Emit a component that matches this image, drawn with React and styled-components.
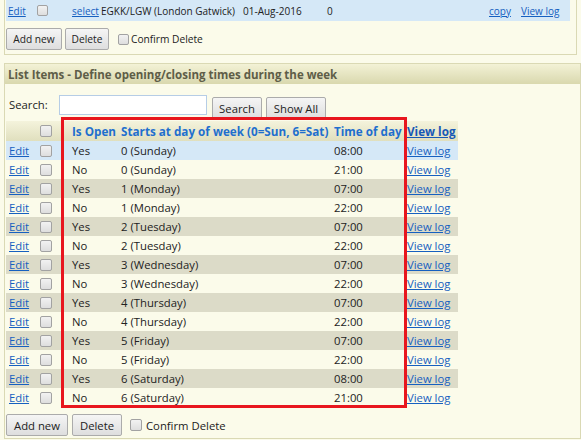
import React from 'react'
import styled, { createGlobalStyle } from 'styled-components'

const GlobalStyle = createGlobalStyle`
  html, body {
    margin: 0;
    padding: 0;
    background: #fbfbea;
    overflow: hidden;
  }
  body {
    font-family: "Open Sans", "Noto Sans", sans-serif;
    color: #222;
  }
`

const items = [
  ['Yes', '0 (Sunday)', '08:00'],
  ['No', '0 (Sunday)', '21:00'],
  ['Yes', '1 (Monday)', '07:00'],
  ['No', '1 (Monday)', '22:00'],
  ['Yes', '2 (Tuesday)', '07:00'],
  ['No', '2 (Tuesday)', '22:00'],
  ['Yes', '3 (Wednesday)', '07:00'],
  ['No', '3 (Wednesday)', '22:00'],
  ['Yes', '4 (Thursday)', '07:00'],
  ['No', '4 (Thursday)', '22:00'],
  ['Yes', '5 (Friday)', '07:00'],
  ['No', '5 (Friday)', '22:00'],
  ['Yes', '6 (Saturday)', '08:00'],
  ['No', '6 (Saturday)', '21:00'],
]

const rowTone = (i) => (i === 0 ? '#d5e8f7' : i % 2 === 1 ? '#fbfbea' : '#dcdbc8')

const App = () => {
  return (
    <>
      <GlobalStyle />
      <Panel $width="573px" $top="0">
        <RecordRow>
          <Cell><Link>Edit</Link></Cell>
          <Cell><Box $size={11} /></Cell>
          <Cell><Link>select</Link></Cell>
          <Cell>EGKK/LGW (London Gatwick)</Cell>
          <Cell>01-Aug-2016</Cell>
          <Cell>0</Cell>
          <Cell><Link>copy</Link></Cell>
          <Cell><Link>View log</Link></Cell>
        </RecordRow>
        <ButtonBar $small>
          <Button $small $w={56}>Add new</Button>
          <Button $small $w={44}>Delete</Button>
          <Confirm $small>
            <Box $size={11} />
            Confirm Delete
          </Confirm>
        </ButtonBar>
      </Panel>

      <Panel $width="577px" $top="8px" $bordered>
        <PanelTitle>List Items - Define opening/closing times during the week</PanelTitle>
        <SearchRow>
          <SearchLabel>Search:</SearchLabel>
          <SearchInput />
          <Button $w={50}>Search</Button>
          <Button $w={60}>Show All</Button>
        </SearchRow>

        <Table>
          <HeadRow>
            <HeadCell />
            <HeadCell><Box $size={12} /></HeadCell>
            <HeadCell>Is Open</HeadCell>
            <HeadCell>Starts at day of week (0=Sun, 6=Sat)</HeadCell>
            <HeadCell>Time of day</HeadCell>
            <HeadCell><HeadLink>View log</HeadLink></HeadCell>
          </HeadRow>
          {items.map((r, i) => (
            <DataRow key={i} $bg={rowTone(i)}>
              <DataCell><Link>Edit</Link></DataCell>
              <DataCell><Box $size={12} /></DataCell>
              <DataCell>{r[0]}</DataCell>
              <DataCell>{r[1]}</DataCell>
              <DataCell>{r[2]}</DataCell>
              <DataCell><Link>View log</Link></DataCell>
            </DataRow>
          ))}
          <Highlight />
        </Table>

        <ButtonBar>
          <Button $w={62}>Add new</Button>
          <Button $w={50}>Delete</Button>
          <Confirm>
            <Box $size={12} />
            Confirm Delete
          </Confirm>
        </ButtonBar>
      </Panel>
    </>
  )
}

export default App

const Panel = styled.div`
  margin: ${p => p.$top} 0 0 4px;
  width: ${p => p.$width};
  box-sizing: border-box;
  border: 1px solid #dad9b4;
  border-top: ${p => (p.$bordered ? '1px solid #dad9b4' : 'none')};
  padding: 0 1px;
  background: #fbfbea;
`

const RecordRow = styled.div`
  display: grid;
  grid-template-columns: 29px 35px 29px 142px 84px 162px 32px 51px;
  align-items: center;
  height: 21px;
  margin-right: 5px;
  background: #d5e8f7;
  font-size: 10px;
`

const Cell = styled.div`
  padding-left: 2px;
  white-space: nowrap;
  display: flex;
  align-items: center;
`

const Link = styled.a`
  color: #1660c0;
  text-decoration: underline;
  cursor: pointer;
`

const Box = styled.span`
  display: inline-block;
  box-sizing: border-box;
  width: ${p => p.$size}px;
  height: ${p => p.$size}px;
  border: 1px solid #a2a2a2;
  border-radius: 2px;
  background: linear-gradient(#f2f2f2, #dedede);
  flex-shrink: 0;
`

const ButtonBar = styled.div`
  display: flex;
  align-items: center;
  gap: ${p => (p.$small ? '3px' : '4px')};
  margin-top: 7px;
  padding-bottom: ${p => (p.$small ? '4px' : '2px')};
`

const Button = styled.button`
  box-sizing: border-box;
  width: ${p => p.$w}px;
  height: 22px;
  padding: 0;
  border: 1px solid #ababab;
  border-radius: 2px;
  background: linear-gradient(#f5f5f5, #dedede);
  color: #222;
  font-family: inherit;
  font-size: ${p => (p.$small ? '10.2px' : '11.3px')};
  cursor: pointer;
`

const Confirm = styled.label`
  display: flex;
  align-items: center;
  gap: ${p => (p.$small ? '2px' : '4px')};
  margin-left: ${p => (p.$small ? '6px' : '4px')};
  font-size: ${p => (p.$small ? '10.2px' : '11.3px')};
  color: #222;
`

const PanelTitle = styled.div`
  height: 20px;
  margin: 0 -1px;
  padding-left: 3px;
  display: flex;
  align-items: center;
  background: linear-gradient(#f3f2d6, #d9d8ae);
  color: #5e5d48;
  font-weight: bold;
  font-size: 11.5px;
  white-space: nowrap;
`

const SearchRow = styled.div`
  display: flex;
  align-items: flex-start;
  gap: 4px;
  height: 24px;
  margin-top: 11px;
  margin-bottom: 2px;
  button {
    margin-top: 2px;
  }
`

const SearchLabel = styled.div`
  width: 49px;
  padding-left: 3px;
  box-sizing: border-box;
  line-height: 20px;
  font-size: 11.3px;
`

const SearchInput = styled.input`
  box-sizing: border-box;
  width: 148px;
  height: 20px;
  margin: 0 1px 0 0;
  border: 1px solid #b6cde6;
  background: #fff;
  outline: none;
`

const Table = styled.div`
  position: relative;
  width: 452px;
  font-size: 11.3px;
`

const columns = '31px 32px 49px 213px 73px 54px'

const HeadRow = styled.div`
  display: grid;
  grid-template-columns: ${columns};
  align-items: center;
  height: 20px;
  background: linear-gradient(#f4f3dc, #e0dfbe);
`

const HeadCell = styled.div`
  padding-left: 3px;
  display: flex;
  align-items: center;
  white-space: nowrap;
  font-weight: bold;
  font-size: 11.7px;
  color: #1f6fce;
`

const HeadLink = styled.a`
  color: #1658b6;
  text-decoration: underline;
`

const DataRow = styled.div`
  display: grid;
  grid-template-columns: ${columns};
  align-items: center;
  height: 19px;
  background: ${p => p.$bg};
`

const DataCell = styled.div`
  padding-left: 3px;
  display: flex;
  align-items: center;
  white-space: nowrap;
  color: #222;
`

const Highlight = styled.div`
  position: absolute;
  left: 55px;
  top: -4px;
  width: 346px;
  height: 291px;
  box-sizing: border-box;
  border: 3px solid #e8161e;
  pointer-events: none;
`
